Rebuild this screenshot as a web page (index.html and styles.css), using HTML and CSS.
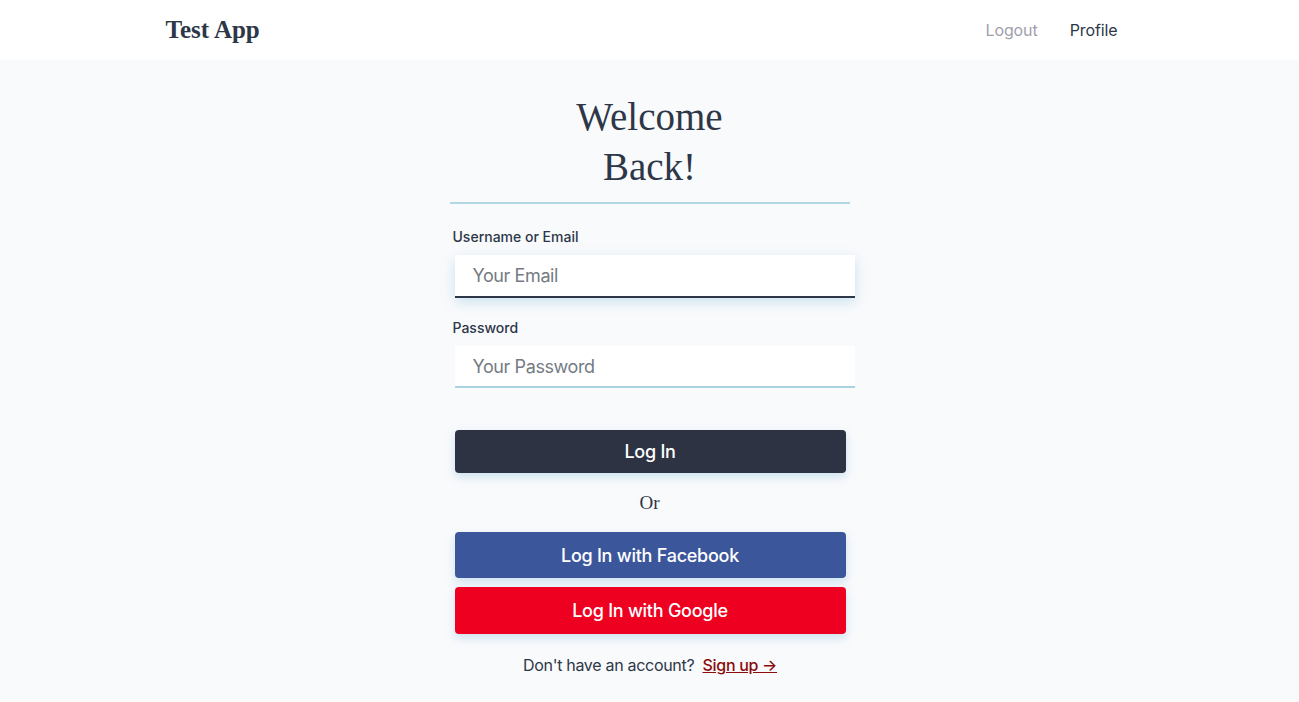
FILE: index.html
```html
<!DOCTYPE html>
<html lang="en">
<head>
<meta charset="utf-8">
<title>Test App</title>
<link rel="stylesheet" href="styles.css">
</head>
<body>
<header class="topbar">
  <div class="topbar-inner">
    <a class="brand" href="#">Test App</a>
    <nav class="nav">
      <a class="nav-link muted" href="#">Logout</a>
      <a class="nav-link" href="#">Profile</a>
    </nav>
  </div>
</header>
<main class="page">
  <section class="auth">
    <h1 class="auth-title">Welcome Back!</h1>
    <form class="auth-form">
      <label class="field-label" for="email">Username or Email</label>
      <input class="field-input focused" id="email" type="text" placeholder="Your Email">
      <label class="field-label" for="password">Password</label>
      <input class="field-input field-last" id="password" type="password" placeholder="Your Password">
      <button class="btn btn-dark" type="button">Log In</button>
      <p class="or">Or</p>
      <button class="btn btn-facebook" type="button">Log In with Facebook</button>
      <button class="btn btn-google" type="button">Log In with Google</button>
      <p class="signup">Don't have an account? <a class="signup-link" href="#">Sign up →</a></p>
    </form>
  </section>
</main>
</body>
</html>
```

FILE: styles.css
```css
* { box-sizing: border-box; }
html, body { margin: 0; padding: 0; }
body {
  font-family: Inter, "Noto Sans", sans-serif;
  color: #2d3748;
  background: #f9fafc;
  min-height: 702px;
}
a { text-decoration: none; color: inherit; }

.topbar {
  background: #ffffff;
  height: 60px;
}
.topbar-inner {
  max-width: 1000px;
  margin: 0 auto;
  padding: 0 16px;
  height: 100%;
  display: flex;
  align-items: center;
  justify-content: space-between;
}
.brand {
  font-family: "Liberation Serif", "DejaVu Serif", serif;
  font-weight: 700;
  font-size: 25px;
  color: #2d3748;
}
.nav { display: flex; }
.nav-link {
  font-size: 16px;
  padding: 0 16px;
  color: #2d3748;
  letter-spacing: -0.1px;
}
.nav-link.muted { color: #a0a0ac; }

.page {
  display: flex;
  justify-content: center;
  padding-top: 32px;
}
.auth {
  width: 400px;
  display: flex;
  flex-direction: column;
}
.auth-title {
  margin: 0;
  font-family: "Liberation Serif", "DejaVu Serif", serif;
  font-weight: 400;
  font-size: 39px;
  line-height: 50px;
  text-align: center;
  padding: 0 110px 10px;
  border-bottom: 2px solid #b3d6e4;
  color: #2d3748;
}
.auth-form {
  display: flex;
  flex-direction: column;
  padding-top: 23px;
}
.field-label {
  font-size: 14px;
  line-height: 20px;
  font-weight: 450;
  margin-left: 3px;
  margin-bottom: 8px;
  color: #2d3748;
}
.field-input {
  margin-left: 5px;
  width: 400px;
  height: 43px;
  border: 0;
  border-bottom: 2px solid #a9d2e3;
  background: #ffffff;
  font-family: inherit;
  font-size: 18px;
  letter-spacing: -0.4px;
  padding: 0 18px;
  color: #2d3748;
  outline: none;
  margin-bottom: 20px;
}
.field-input::placeholder { color: #757b84; }
.field-input.focused {
  border-bottom-color: #2d3748;
  box-shadow: 0 4px 12px rgba(120, 180, 215, 0.35);
}
.field-last { margin-bottom: 42px; height: 42px; }

.btn {
  margin-left: 5px;
  width: 391px;
  border: 0;
  border-radius: 4px;
  color: #ffffff;
  font-family: inherit;
  font-size: 18px;
  font-weight: 450;
  letter-spacing: -0.25px;
  cursor: pointer;
  box-shadow: 0 4px 10px rgba(120, 180, 215, 0.35);
}
.btn-dark { background: #2d3343; height: 43px; }
.btn-facebook { background: #3c569c; height: 46px; margin-bottom: 9px; }
.btn-google { background: #ee0021; height: 47px; }
.or {
  margin: 17px 0 16px;
  font-family: "Liberation Serif", "DejaVu Serif", serif;
  font-size: 19px;
  line-height: 26px;
  text-align: center;
  color: #2d3748;
}
.signup {
  margin: 20px 0 0;
  text-align: center;
  font-size: 16px;
  line-height: 22px;
  letter-spacing: -0.3px;
  color: #2d3748;
  padding-left: 1px;
}
.signup-link {
  color: #8c0a0a;
  font-weight: 500;
  text-decoration: underline;
  margin-left: 4px;
}
```
